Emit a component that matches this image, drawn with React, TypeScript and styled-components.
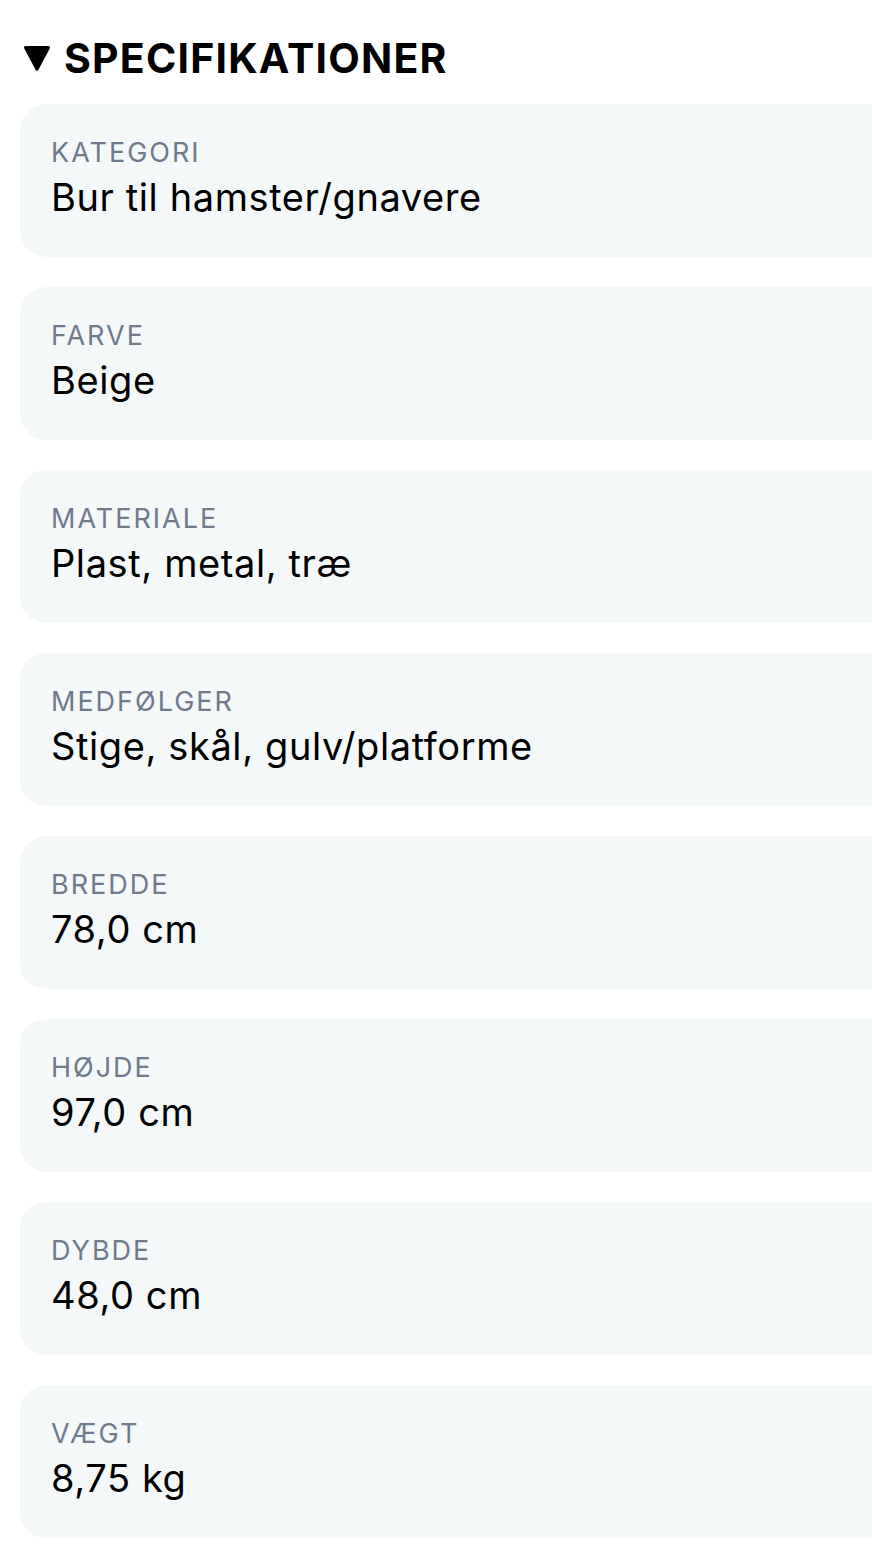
import React from "react";
import styled, { createGlobalStyle } from "styled-components";

const Global = createGlobalStyle`
  html, body { margin: 0; padding: 0; background: #ffffff; overflow: hidden; }
  body { font-family: Inter, "Noto Sans", "Liberation Sans", sans-serif; -webkit-font-smoothing: antialiased; }
`;

const Page = styled.div`
  width: 872px;
  overflow: hidden;
  padding: 30px 0 0 20px;
  box-sizing: border-box;
`;

const Header = styled.h2`
  display: flex;
  align-items: center;
  gap: 13px;
  margin: 0 0 18px 0;
  padding-left: 3px;
  font-size: 41px;
  line-height: 56px;
  font-weight: 700;
  color: #000;
  letter-spacing: 1.2px;
`;

const Arrow = styled.svg`
  width: 28px;
  height: 28px;
  flex: none;
`;

const List = styled.div`
  display: flex;
  flex-direction: column;
  gap: 30px;
`;

const Card = styled.div`
  width: 900px;
  height: 153px;
  box-sizing: border-box;
  padding: 32px 31px 0;
  background: #f5f8f9;
  border-radius: 26px;
`;

const Label = styled.div`
  font-size: 27px;
  line-height: 34px;
  color: #6f7a8b;
  letter-spacing: 2px;
  text-transform: uppercase;
`;

const Value = styled.div`
  font-size: 38px;
  line-height: 48px;
  color: #000;
  margin-top: 3px;
  letter-spacing: 0.6px;
`;

const specs = [
  ["Kategori", "Bur til hamster/gnavere"],
  ["Farve", "Beige"],
  ["Materiale", "Plast, metal, træ"],
  ["Medfølger", "Stige, skål, gulv/platforme"],
  ["Bredde", "78,0 cm"],
  ["Højde", "97,0 cm"],
  ["Dybde", "48,0 cm"],
  ["Vægt", "8,75 kg"],
];

export default function App() {
  return (
    <>
      <Global />
      <Page>
        <Header>
          <Arrow viewBox="0 0 28 28">
            <path d="M3 2 H25 Q28 2 26.6 4.8 L15.6 25.4 Q14 28 12.4 25.4 L1.4 4.8 Q0 2 3 2 Z" fill="#000" />
          </Arrow>
          SPECIFIKATIONER
        </Header>
        <List>
          {specs.map(([l, v]) => (
            <Card key={l}>
              <Label>{l}</Label>
              <Value>{v}</Value>
            </Card>
          ))}
        </List>
      </Page>
    </>
  );
}
